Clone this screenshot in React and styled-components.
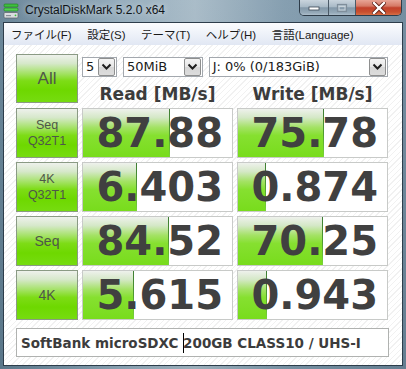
import React from 'react'
import styled, { createGlobalStyle } from 'styled-components'

const GlobalStyle = createGlobalStyle`
  html, body {
    margin: 0;
    padding: 0;
    background: #6f8a9c;
  }
  * {
    box-sizing: border-box;
  }
`

const Window = styled.div`
  width: 406px;
  height: 369px;
  display: flex;
  flex-direction: column;
  padding: 0 3px 3px 3px;
  background:
    linear-gradient(180deg, rgba(255,255,255,0.08) 0%, rgba(0,0,0,0.05) 100%),
    linear-gradient(90deg, #5f7d91 0%, #8ea7b8 30%, #a3b7c4 48%, #7c97aa 70%, #6a8599 100%);
  font-family: "Liberation Sans", Arial, sans-serif;
`

const TitleBar = styled.div`
  height: 22px;
  display: flex;
  align-items: flex-start;
  flex-shrink: 0;
`

const AppIcon = styled.svg`
  width: 16px;
  height: 16px;
  margin: 3px 6px 0 0;
  flex-shrink: 0;
`

const TitleText = styled.div`
  font-size: 12px;
  line-height: 15px;
  padding-top: 3px;
  color: #101418;
  text-shadow: 0 0 6px rgba(255,255,255,0.7);
`

const CaptionGroup = styled.div`
  margin-left: auto;
  margin-right: 1px;
  display: flex;
  height: 16px;
  border: 1px solid #2e3c49;
  border-top: none;
  border-radius: 0 0 5px 5px;
  overflow: hidden;
`

const CaptionButton = styled.div`
  width: ${p => p.$w}px;
  height: 100%;
  display: flex;
  align-items: center;
  justify-content: center;
  border-left: ${p => (p.$first ? 'none' : '1px solid #4b5a68')};
  background: ${p =>
    p.$close
      ? 'linear-gradient(180deg, #e8a596 0%, #d67a66 40%, #c2412b 52%, #c9502f 80%, #d66e46 100%)'
      : 'linear-gradient(180deg, #c9d4dd 0%, #a9bac7 45%, #8398a9 52%, #95a9b8 85%, #aebfcc 100%)'};
`

const ClientFrame = styled.div`
  flex: 1;
  display: flex;
  flex-direction: column;
  border: 1px solid #2d3d4b;
  min-height: 0;
`

const MenuBar = styled.div`
  height: 22px;
  display: flex;
  align-items: center;
  gap: 15.5px;
  padding-left: 7px;
  background: linear-gradient(180deg, #fbfcfe 0%, #eef2f9 50%, #e1e7f3 100%);
  font-family: "Liberation Sans", "Noto Sans CJK JP", sans-serif;
  font-size: 11.5px;
  color: #1a1a1a;
`

const MenuItem = styled.span`
  white-space: nowrap;
`

const Content = styled.div`
  flex: 1;
  padding: 9px 0 0 12px;
  background-color: #ffffff;
  background-image: repeating-linear-gradient(
    135deg,
    #ffffff 0px,
    #ffffff 3px,
    #f1f1f1 3px,
    #f1f1f1 4px
  );
`

const Board = styled.div`
  display: grid;
  grid-template-columns: 62px 151px 151px;
  grid-auto-rows: 50px;
  gap: 4px;
`

const LabelButton = styled.div`
  border: 1px solid #8a9a84;
  display: flex;
  flex-direction: column;
  align-items: center;
  justify-content: center;
  background: linear-gradient(
    180deg,
    #eef1ec 0%,
    #d6e8ca 18%,
    #a2e262 40%,
    #7ddc16 55%,
    #6ed800 75%,
    #76dc10 100%
  );
  color: #4e5749;
  font-size: ${p => p.$size}px;
  line-height: 16px;
  height: ${p => (p.$tall ? '49px' : '50px')};
`

const TopControls = styled.div`
  grid-column: 2 / 4;
  display: flex;
  flex-direction: column;
`

const SelectRow = styled.div`
  display: flex;
  gap: 6px;
  margin-top: 3px;
`

const Select = styled.div`
  width: ${p => p.$w}px;
  height: 20px;
  display: flex;
  align-items: stretch;
  border: 1px solid #a3a8ae;
  background: #ffffff;
`

const SelectText = styled.div`
  flex: 1;
  padding-left: 3px;
  font-family: "DejaVu Sans", Verdana, sans-serif;
  font-size: 13px;
  line-height: 18px;
  color: #1a1a1a;
  white-space: nowrap;
  overflow: hidden;
`

const DropButton = styled.div`
  width: 17px;
  margin: 0 1px 0 0;
  border: 1px solid #8e8f8f;
  border-radius: 2px;
  display: flex;
  align-items: center;
  justify-content: center;
  background: linear-gradient(180deg, #f4f4f4 0%, #e6e6e6 50%, #d6d6d6 51%, #dcdcdc 100%);
`

const HeaderRow = styled.div`
  display: grid;
  grid-template-columns: 151px 151px;
  gap: 4px;
  margin-top: 7px;
`

const Header = styled.div`
  text-align: center;
  font-family: "DejaVu Sans", Verdana, sans-serif;
  font-weight: bold;
  font-size: 17px;
  line-height: 20px;
  color: #3c3c3c;
`

const ValueCell = styled.div`
  position: relative;
  border: 1px solid #c8cac8;
  background: #ffffff;
  overflow: hidden;
  display: flex;
  align-items: center;
  justify-content: flex-end;
  padding-right: 9px;
`

const Fill = styled.div`
  position: absolute;
  left: 0;
  top: 0;
  bottom: 0;
  background: linear-gradient(
    180deg,
    #eef1ec 0%,
    #d4e8c6 18%,
    #a4e266 38%,
    #86e030 55%,
    #78dc1c 100%
  );
  &::after {
    content: "";
    position: absolute;
    right: 0;
    top: 0;
    bottom: 0;
    width: 1px;
    background: linear-gradient(180deg, #3e7d34 0%, #4f9a30 50%, #7bd63a 100%);
  }
`

const Value = styled.div`
  position: relative;
  font-family: "DejaVu Sans", Verdana, sans-serif;
  font-weight: bold;
  font-size: 40px;
  line-height: 48px;
  color: #404040;
`

const CommentBox = styled.div`
  margin-top: 8px;
  width: 373px;
  height: 29px;
  border: 1px solid #b0b2b0;
  background: #ffffff;
  display: flex;
  align-items: center;
  padding-left: 4px;
  font-family: "DejaVu Sans", Verdana, sans-serif;
  font-weight: bold;
  font-size: 13.5px;
  color: #3c3c3c;
  white-space: nowrap;
`

const Caret = styled.span`
  display: inline-block;
  width: 1px;
  height: 20px;
  margin-right: -1px;
  background: #000000;
  vertical-align: middle;
`

const Chevron = () => (
  <svg width="11" height="8" viewBox="0 0 11 8">
    <polyline points="1.5,1.5 5.5,5.5 9.5,1.5" fill="none" stroke="#1e1e1e" strokeWidth="2" />
  </svg>
)

const rows = [
  { label: ['Seq', 'Q32T1'], read: 87.88, readFill: 87, write: 75.78, writeFill: 86 },
  { label: ['4K', 'Q32T1'], read: 6.403, readFill: 54, write: 0.874, writeFill: 28 },
  { label: ['Seq'], read: 84.52, readFill: 86, write: 70.25, writeFill: 85 },
  { label: ['4K'], read: 5.615, readFill: 51, write: 0.943, writeFill: 29 }
]

const menus = ['ファイル(F)', '設定(S)', 'テーマ(T)', 'ヘルプ(H)', '言語(Language)']

const fmt = v => (v < 10 ? v.toFixed(3) : v.toFixed(2))

const App = () => (
  <>
    <GlobalStyle />
    <Window>
      <TitleBar>
        <AppIcon viewBox="0 0 16 16">
          <rect x="1" y="1" width="14" height="3" rx="1" fill="#3fbf3f" stroke="#1f7a1f" strokeWidth="0.6" />
          <rect x="1" y="5" width="14" height="3" rx="1" fill="#4fd04f" stroke="#1f7a1f" strokeWidth="0.6" />
          <rect x="1" y="9.5" width="14" height="5.5" rx="1" fill="#d9dcdf" stroke="#5a5f66" strokeWidth="0.7" />
          <rect x="3" y="12" width="5" height="1.2" fill="#8a9099" />
          <circle cx="12.5" cy="12.3" r="0.9" fill="#39c639" />
        </AppIcon>
        <TitleText>CrystalDiskMark 5.2.0 x64</TitleText>
        <CaptionGroup>
          <CaptionButton $w={28} $first>
            <svg width="12" height="6" viewBox="0 0 12 6">
              <rect x="1" y="2" width="10" height="3" fill="#ffffff" stroke="#3a4754" strokeWidth="0.8" />
            </svg>
          </CaptionButton>
          <CaptionButton $w={27}>
            <svg width="12" height="10" viewBox="0 0 12 10">
              <rect x="1.5" y="1.5" width="9" height="7" fill="none" stroke="#7f8e9b" strokeWidth="1.2" />
              <rect x="3" y="3.5" width="6" height="3.5" fill="none" stroke="#c9d3db" strokeWidth="1" />
            </svg>
          </CaptionButton>
          <CaptionButton $w={46} $close>
            <svg width="14" height="12" viewBox="0 0 14 12">
              <path d="M2 1 L12 11 M12 1 L2 11" stroke="#5a1a10" strokeWidth="4" strokeLinecap="square" />
              <path d="M2 1 L12 11 M12 1 L2 11" stroke="#ffffff" strokeWidth="2.4" strokeLinecap="square" />
            </svg>
          </CaptionButton>
        </CaptionGroup>
      </TitleBar>
      <ClientFrame>
        <MenuBar>
          {menus.map(m => (
            <MenuItem key={m}>{m}</MenuItem>
          ))}
        </MenuBar>
        <Content>
          <Board>
            <LabelButton $size={17} $tall>All</LabelButton>
            <TopControls>
              <SelectRow>
                <Select $w={35}>
                  <SelectText>5</SelectText>
                  <DropButton><Chevron /></DropButton>
                </Select>
                <Select $w={80}>
                  <SelectText>50MiB</SelectText>
                  <DropButton><Chevron /></DropButton>
                </Select>
                <Select $w={180}>
                  <SelectText>J: 0% (0/183GiB)</SelectText>
                  <DropButton><Chevron /></DropButton>
                </Select>
              </SelectRow>
              <HeaderRow>
                <Header>Read [MB/s]</Header>
                <Header>Write [MB/s]</Header>
              </HeaderRow>
            </TopControls>
            {rows.map((r, i) => (
              <React.Fragment key={i}>
                <LabelButton $size={r.label.length > 1 ? 12.5 : 14}>
                  {r.label.map(l => (
                    <span key={l}>{l}</span>
                  ))}
                </LabelButton>
                <ValueCell>
                  <Fill style={{ width: `${r.readFill}px` }} />
                  <Value>{fmt(r.read)}</Value>
                </ValueCell>
                <ValueCell>
                  <Fill style={{ width: `${r.writeFill}px` }} />
                  <Value>{fmt(r.write)}</Value>
                </ValueCell>
              </React.Fragment>
            ))}
          </Board>
          <CommentBox>
            SoftBank microSDXC&nbsp;<Caret />200GB CLASS10 / UHS-I
          </CommentBox>
        </Content>
      </ClientFrame>
    </Window>
  </>
)

export default App
